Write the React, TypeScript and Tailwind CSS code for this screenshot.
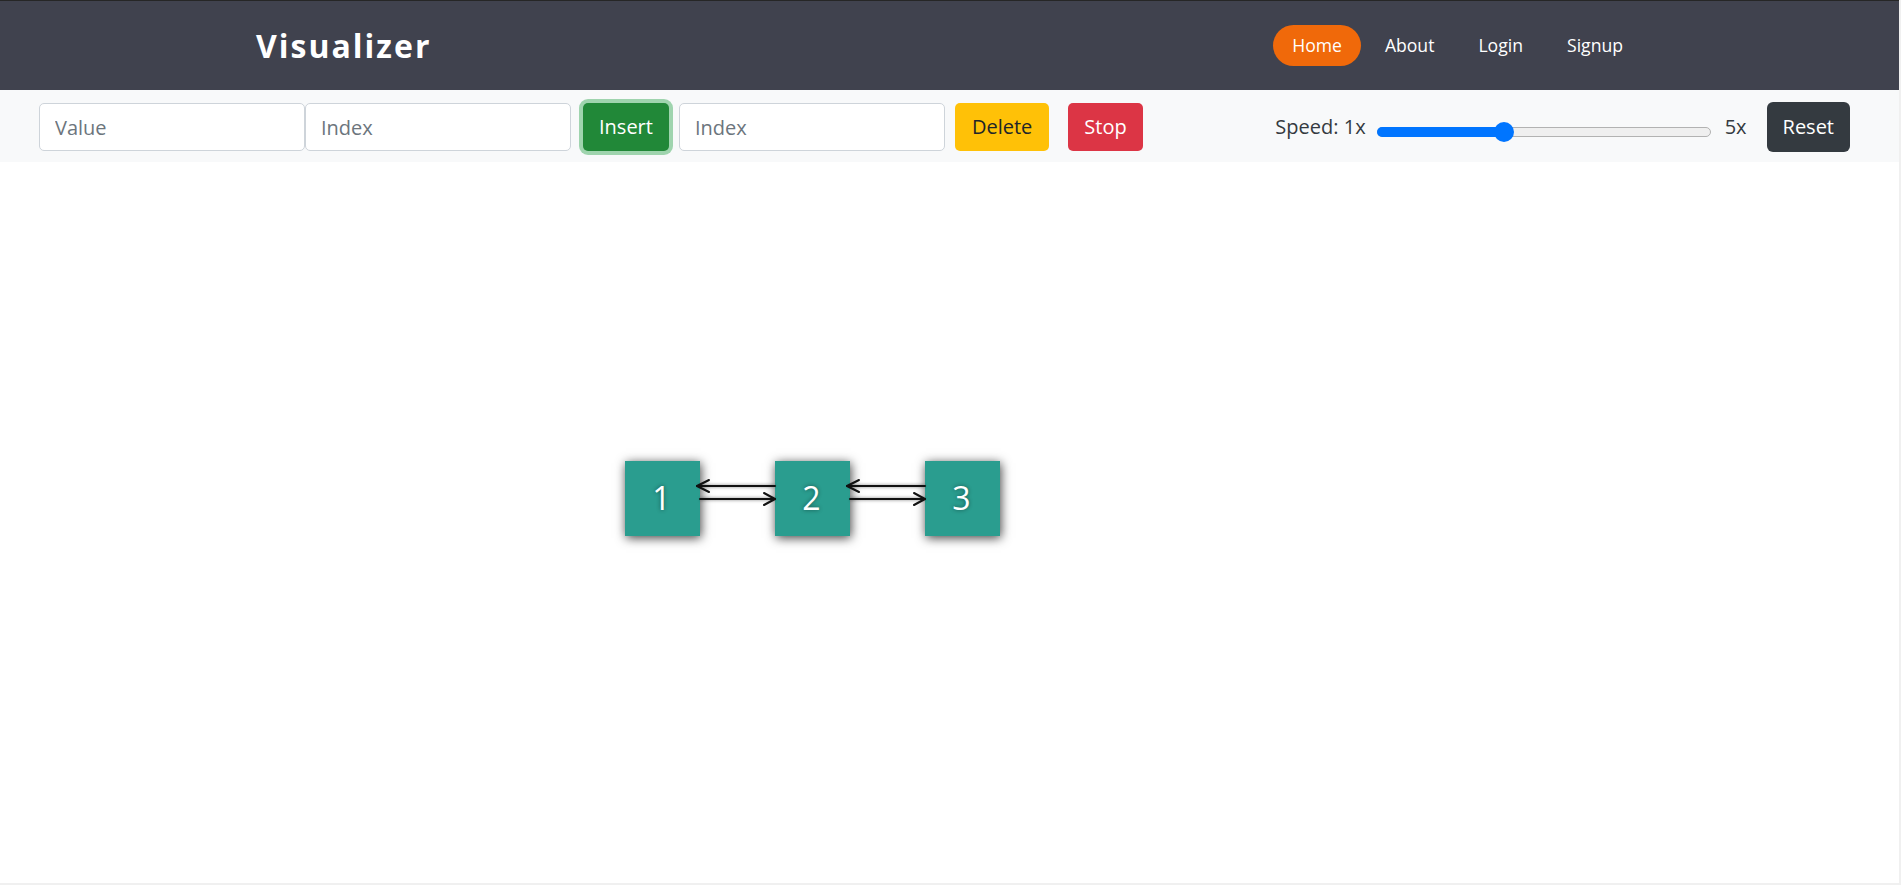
import React from "react";

const FONT = { fontFamily: '"Open Sans", "Liberation Sans", sans-serif' };

function Arrows() {
  return (
    <svg width="75" height="75" viewBox="0 0 75 75" className="relative z-10 overflow-visible shrink-0">
      <defs>
        <filter id="glow" x="-20%" y="-50%" width="140%" height="200%">
          <feGaussianBlur stdDeviation="1.5" />
        </filter>
      </defs>
      <g stroke="#000" strokeOpacity="0.35" strokeWidth="3" fill="none" filter="url(#glow)">
        <line x1="75" y1="25" x2="-2" y2="25" />
        <line x1="0" y1="38" x2="75" y2="38" />
      </g>
      <g stroke="#111" strokeWidth="2" fill="none" strokeLinecap="round" strokeLinejoin="round">
        <line x1="75" y1="25" x2="-3" y2="25" />
        <polyline points="9,19 -3,25 9,31" />
        <line x1="0" y1="38" x2="75" y2="38" />
        <polyline points="64,32 75,38 64,44" />
      </g>
    </svg>
  );
}

function Node({ n }: { n: number }) {
  return (
    <div className="w-[75px] h-[75px] shrink-0 bg-[#2a9d8f] flex items-center justify-center text-white text-[32px] leading-none shadow-[1px_2px_10px_rgba(0,0,0,0.75)] [text-shadow:0_0_4px_rgba(0,0,0,0.45)]">
      <span className="-mt-[1px] -ml-[2px]">{n}</span>
    </div>
  );
}

export default function App() {
  const value = 2.5;
  const pct = (value - 1) / 4;
  const trackW = 334;
  const thumb = 20;
  const thumbLeft = pct * (trackW - thumb);

  return (
    <div className="w-[1901px] h-[885px] bg-[#f0f0f0] overflow-hidden" style={FONT}>
      <div className="w-[1899px] h-[883px] bg-white flex flex-col">
        {/* Navbar */}
        <nav className="h-[90px] shrink-0 bg-[#40424e] border-t border-[#262626] flex items-center justify-between px-[256px]">
          <div className="text-white text-[32px] font-bold tracking-[2px] leading-none">Visualizer</div>
          <div className="flex items-center gap-[4px] text-white text-[17.6px]">
            <a className="h-[41px] px-[19px] flex items-center rounded-full bg-[#f0690a]">Home</a>
            <a className="h-[41px] px-[20px] flex items-center">About</a>
            <a className="h-[41px] px-[20px] flex items-center">Login</a>
            <a className="h-[41px] px-[20px] flex items-center">Signup</a>
          </div>
        </nav>

        {/* Toolbar */}
        <div className="h-[72px] shrink-0 bg-[#f8f9fa] flex items-center justify-between pt-[2px] pl-[39px] pr-[49px] text-[20px]">
          <div className="flex items-center">
            <input
              placeholder="Value"
              className="w-[266px] h-[48px] px-[15px] bg-white border border-[#ced4da] rounded-[5px] text-[#495057] placeholder:text-[#6c757d] outline-none"
            />
            <input
              placeholder="Index"
              className="w-[266px] h-[48px] px-[15px] bg-white border border-[#ced4da] rounded-[5px] text-[#495057] placeholder:text-[#6c757d] outline-none"
            />
            <button className="ml-[12px] h-[48px] px-[16px] bg-[#218838] text-white rounded-[5px] ring-4 ring-[#9fd4ae]">
              Insert
            </button>
            <input
              placeholder="Index"
              className="ml-[10px] w-[266px] h-[48px] px-[15px] bg-white border border-[#ced4da] rounded-[5px] text-[#495057] placeholder:text-[#6c757d] outline-none"
            />
            <button className="ml-[10px] h-[48px] px-[17px] bg-[#ffc107] text-[#212529] rounded-[5px]">
              Delete
            </button>
            <button className="ml-[19px] h-[48px] px-[16px] bg-[#dc3545] text-white rounded-[5px]">
              Stop
            </button>
          </div>
          <div className="flex items-center text-[#343a40]">
            <span>Speed: 1x</span>
            <div className="ml-[11px] mt-[10px] relative w-[334px] h-[20px] flex items-center">
              <div className="w-full h-[10px] rounded-full bg-[#efefef] border border-[#b2b2b2]" />
              <div
                className="absolute left-0 h-[10px] rounded-full bg-[#0075ff]"
                style={{ width: thumbLeft + thumb / 2 }}
              />
              <div
                className="absolute top-0 w-[20px] h-[20px] rounded-full bg-[#0075ff]"
                style={{ left: thumbLeft }}
              />
            </div>
            <span className="ml-[14px]">5x</span>
            <button className="ml-[20px] h-[50px] px-[16px] bg-[#343a40] text-white rounded-[6px]">
              Reset
            </button>
          </div>
        </div>

        {/* Canvas */}
        <div className="flex-1 bg-white pt-[299px] pl-[625px]">
          <div className="flex items-start">
            <Node n={1} />
            <Arrows />
            <Node n={2} />
            <Arrows />
            <Node n={3} />
          </div>
        </div>
      </div>
    </div>
  );
}
